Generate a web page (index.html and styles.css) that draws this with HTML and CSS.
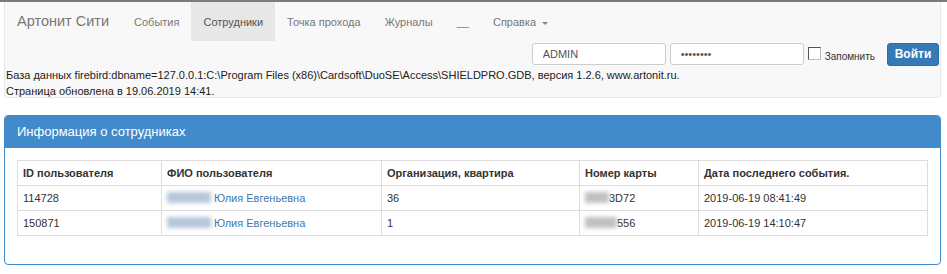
FILE: index.html
```html
<!DOCTYPE html>
<html>
  <head>
    <title>Артонит Сити</title>
    <link rel="stylesheet" href="styles.css">
  </head>
  <body>
    <div class="topline"></div>
    <div class="navbar">
      <div class="nav-row">
        <a class="brand" href="#">Артонит Сити</a>
        <a class="nav-link" href="#">События</a>
        <a class="nav-link active" href="#">Сотрудники</a>
        <a class="nav-link" href="#">Точка прохода</a>
        <a class="nav-link" href="#">Журналы</a>
        <a class="nav-link" href="#">__</a>
        <a class="nav-link" href="#">Справка <span class="caret"></span></a>
      </div>
      <form class="login">
        <input class="field" type="text" value="ADMIN">
        <input class="field" type="password" value="12345678">
        <label class="remember"><span class="check"></span>Запомнить</label>
        <button class="btn" type="button">Войти</button>
      </form>
      <div class="info">
        <div>База данных firebird:dbname=127.0.0.1:C:\Program Files (x86)\Cardsoft\DuoSE\Access\SHIELDPRO.GDB, версия 1.2.6, www.artonit.ru.</div>
        <div>Страница обновлена в 19.06.2019 14:41.</div>
      </div>
    </div>

    <div class="panel">
      <div class="panel-heading">Информация о сотрудниках</div>
      <div class="panel-body">
        <table class="grid">
          <colgroup>
            <col style="width:144px">
            <col style="width:220px">
            <col style="width:198px">
            <col style="width:119px">
            <col>
          </colgroup>
          <thead>
            <tr>
              <th>ID пользователя</th>
              <th>ФИО пользователя</th>
              <th>Организация, квартира</th>
              <th>Номер карты</th>
              <th>Дата последнего события.</th>
            </tr>
          </thead>
          <tbody>
            <tr>
              <td>114728</td>
              <td><a href="#"><span class="blur name"></span> Юлия Евгеньевна</a></td>
              <td>36</td>
              <td><span class="blur card"></span>3D72</td>
              <td>2019-06-19 08:41:49</td>
            </tr>
            <tr>
              <td>150871</td>
              <td><a href="#"><span class="blur name"></span> Юлия Евгеньевна</a></td>
              <td>1</td>
              <td><span class="blur card wide"></span>556</td>
              <td>2019-06-19 14:10:47</td>
            </tr>
          </tbody>
        </table>
      </div>
    </div>
  </body>
</html>
```

FILE: styles.css
```css
body {
  margin: 0;
  font-family: "Liberation Sans", Arial, sans-serif;
  font-size: 11px;
  color: #333;
  background: #fff;
}
a {
  text-decoration: none;
}
.topline {
  height: 2px;
  background: #7b7b7b;
}
.navbar {
  margin: 0 6px 0 4px;
  border: 1px solid #e7e7e7;
  border-top: none;
  border-radius: 0 0 4px 4px;
  background: #f8f8f8;
  height: 95px;
}
.nav-row {
  display: flex;
  align-items: stretch;
  height: 39px;
}
.brand {
  font-size: 14.5px;
  color: #777;
  padding: 0 13px 0 12px;
  line-height: 39px;
}
.nav-link {
  color: #777;
  font-size: 11px;
  padding: 0 12px;
  line-height: 40px;
}
.nav-link.active {
  background: #e7e7e7;
  color: #555;
}
.caret {
  display: inline-block;
  width: 0;
  height: 0;
  margin-left: 3px;
  vertical-align: middle;
  border-top: 3px solid #888;
  border-left: 3px solid transparent;
  border-right: 3px solid transparent;
}
.login {
  display: flex;
  justify-content: flex-end;
  align-items: center;
  gap: 4px;
  padding-right: 1px;
  margin: 1px 0 0;
  height: 24px;
}
.field {
  width: 134px;
  height: 22px;
  box-sizing: border-box;
  border: 1px solid #ccc;
  border-radius: 3px;
  padding: 0 10px;
  font-family: "Liberation Sans", Arial, sans-serif;
  font-size: 11px;
  color: #555;
  background: #fff;
}
.remember {
  display: flex;
  align-items: flex-end;
  font-size: 10px;
  color: #333;
  margin-right: 8px;
}
.check {
  width: 11px;
  height: 11px;
  border: 1px solid #555;
  border-right-color: #bbb;
  border-bottom-color: #bbb;
  background: #fff;
  margin-right: 4px;
  margin-bottom: 2px;
}
.btn {
  background: #337ab7;
  border: 1px solid #2e6da4;
  border-radius: 3px;
  color: #fff;
  font-family: "Liberation Sans", Arial, sans-serif;
  font-size: 12px;
  font-weight: bold;
  width: 52px;
  height: 23px;
  padding: 0;
}
.info {
  padding: 1px 0 0 1px;
  line-height: 16px;
  color: #222;
}
.panel {
  margin: 17px 6px 0 4px;
  border: 1px solid #428bca;
  border-radius: 4px;
  overflow: hidden;
}
.panel-heading {
  background: #428bca;
  color: #fff;
  font-size: 13px;
  height: 32px;
  line-height: 32px;
  padding: 0 12px;
}
.panel-body {
  padding: 12px 12px 28px;
}
.grid {
  width: 100%;
  table-layout: fixed;
  border-collapse: collapse;
}
.grid th,
.grid td {
  border: 1px solid #ddd;
  padding: 0 5px;
  height: 24px;
  text-align: left;
  white-space: nowrap;
}
.grid th {
  font-weight: bold;
}
.grid a {
  color: #3f79ac;
}
.blur {
  display: inline-block;
  height: 11px;
  vertical-align: -1px;
  filter: blur(2px);
}
.blur.name {
  width: 44px;
  background: #b6c6da;
}
.blur.card {
  width: 24px;
  background: #c0c0c0;
}
.blur.card.wide {
  width: 32px;
}
```
